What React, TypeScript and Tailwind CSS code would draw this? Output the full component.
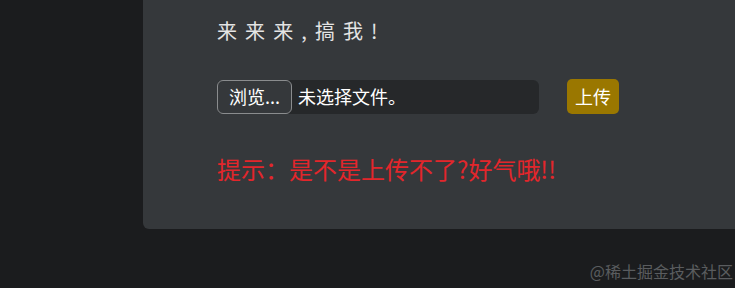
import React from 'react';

const cjk = "font-['Microsoft_YaHei','Noto_Sans_CJK_SC',sans-serif]";

export default function App() {
  return (
    <div className={`relative h-[288px] w-[735px] overflow-hidden bg-[#1b1c1e] ${cjk}`}>
      <div className="ml-[143px] flex h-[229px] flex-col rounded-bl-md bg-[#35383b] pl-[74px] pt-[16px]">
        {/* title */}
        <p className="text-[20px] leading-[30px] tracking-[1.8px] text-[#e4e4e4]">来 来 来 , 搞 我 !</p>

        {/* upload row */}
        <div className="mt-[33px] flex items-center">
          <div className="flex h-[34px] w-[322px] items-center rounded-md bg-[#26282a]">
            <button className="flex h-[34px] w-[75px] items-center justify-center rounded-md border border-[#8a8c8e] bg-[#35383b] text-[18px] text-white">
              浏览...
            </button>
            <span className="ml-[6px] text-[18px] text-white">未选择文件。</span>
          </div>
          <button className="ml-[28px] flex h-[35px] w-[52px] items-center justify-center rounded-[5px] bg-[#9a7700] text-[18px] text-white">
            上传
          </button>
        </div>

        {/* hint */}
        <p className="mt-[40px] text-[24px] leading-[30px] text-[#e3262b]">提示：是不是上传不了?好气哦!!</p>
      </div>

      {/* watermark */}
      <span className="absolute bottom-[7px] right-[2px] text-[16px] leading-[20px] text-[#5a5c5f]">@稀土掘金技术社区</span>
    </div>
  );
}
